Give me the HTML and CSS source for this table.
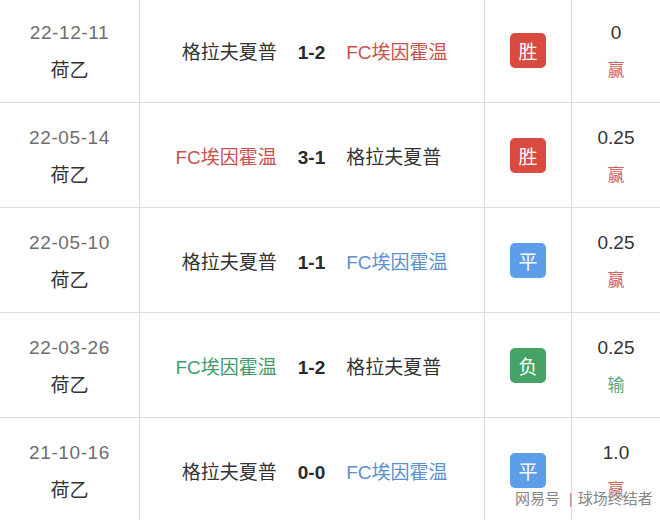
FILE: index.html
```html
<!DOCTYPE html>
<html lang="zh">
<head>
<meta charset="utf-8">
<link rel="stylesheet" href="styles.css">
</head>
<body>
<div class="table">
  <div class="row">
    <div class="cell date"><span class="d">22-12-11</span><span class="lg">荷乙</span></div>
    <div class="cell match"><span class="home">格拉夫夏普</span><span class="score">1-2</span><span class="away red">FC埃因霍温</span></div>
    <div class="cell res"><span class="badge win">胜</span></div>
    <div class="cell odds"><span class="o">0</span><span class="r red">赢</span></div>
  </div>
  <div class="row">
    <div class="cell date"><span class="d">22-05-14</span><span class="lg">荷乙</span></div>
    <div class="cell match"><span class="home red">FC埃因霍温</span><span class="score">3-1</span><span class="away">格拉夫夏普</span></div>
    <div class="cell res"><span class="badge win">胜</span></div>
    <div class="cell odds"><span class="o">0.25</span><span class="r red">赢</span></div>
  </div>
  <div class="row">
    <div class="cell date"><span class="d">22-05-10</span><span class="lg">荷乙</span></div>
    <div class="cell match"><span class="home">格拉夫夏普</span><span class="score">1-1</span><span class="away blue">FC埃因霍温</span></div>
    <div class="cell res"><span class="badge draw">平</span></div>
    <div class="cell odds"><span class="o">0.25</span><span class="r red">赢</span></div>
  </div>
  <div class="row">
    <div class="cell date"><span class="d">22-03-26</span><span class="lg">荷乙</span></div>
    <div class="cell match"><span class="home green">FC埃因霍温</span><span class="score">1-2</span><span class="away">格拉夫夏普</span></div>
    <div class="cell res"><span class="badge lose">负</span></div>
    <div class="cell odds"><span class="o">0.25</span><span class="r green">输</span></div>
  </div>
  <div class="row">
    <div class="cell date"><span class="d">21-10-16</span><span class="lg">荷乙</span></div>
    <div class="cell match"><span class="home">格拉夫夏普</span><span class="score">0-0</span><span class="away blue">FC埃因霍温</span></div>
    <div class="cell res"><span class="badge draw">平</span></div>
    <div class="cell odds"><span class="o">1.0</span><span class="r red">赢</span></div>
  </div>
</div>
<div class="watermark"><span>网易号</span><span class="sep">|</span><span>球场终结者</span></div>
</body>
</html>
```

FILE: styles.css
```css
html, body {
  margin: 0;
  padding: 0;
  background: #fff;
  overflow: hidden;
}
body {
  width: 660px;
  height: 520px;
  position: relative;
  font-family: "Liberation Sans", "Noto Sans CJK SC", sans-serif;
  font-size: 19px;
  color: #333;
}
.table {
  margin-top: -2px;
  display: flex;
  flex-direction: column;
}
.row {
  display: grid;
  grid-template-columns: 140px 345px 87px 88px;
  height: 104px;
  border-bottom: 1px solid #dcdcdc;
}
.cell {
  border-right: 1px solid #dcdcdc;
  display: flex;
  align-items: center;
  justify-content: center;
}
.cell.odds { border-right: none; }
.date, .odds {
  flex-direction: column;
  padding-top: 4px;
}
.date span, .odds span {
  line-height: 38px;
  display: block;
}
.d {
  color: #6e6e6e;
  letter-spacing: 0.6px;
}
.lg { color: #333; }
.match {
  display: grid;
  grid-template-columns: 1fr auto 1fr;
  column-gap: 21px;
  align-items: baseline;
  align-content: center;
  padding-right: 1px;
}
.home { justify-self: end; }
.away { justify-self: start; }
.score {
  font-weight: bold;
  color: #2a2a2a;
}
.red { color: #c9524e; }
.blue { color: #5b8fd0; }
.green { color: #3f9c6c; }
.badge {
  width: 36px;
  height: 35px;
  border-radius: 5px;
  color: #fff;
  display: flex;
  align-items: center;
  justify-content: center;
  font-size: 19px;
  margin-top: 1px;
}
.badge.win { background: #d94a40; }
.badge.draw { background: #5c9eea; }
.badge.lose { background: #45a465; }
.o { color: #333; }
.r { font-size: 17px; }
.odds .r.red { color: #d06660; }
.odds .r.green { color: #5aa87a; }
.watermark {
  position: absolute;
  left: 515px;
  top: 490px;
  font-size: 15px;
  line-height: 18px;
  color: #858585;
  text-shadow: 0 0 1px #fff, 0 0 2px #fff;
  white-space: nowrap;
  display: flex;
  align-items: center;
}
.watermark .sep {
  margin: 0 5px 0 9px;
  font-size: 14px;
}
```
